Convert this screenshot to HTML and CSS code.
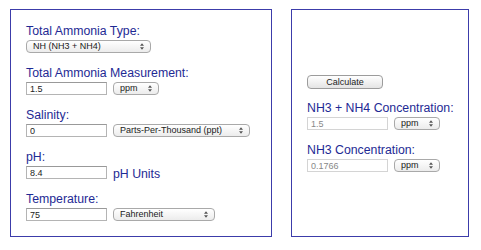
FILE: index.html
```html
<!DOCTYPE html>
<html lang="en">
<head>
    <meta charset="UTF-8">
    <meta name="viewport" content="width=device-width, initial-scale=1.0">
    <title>Ammonia Calculator</title>
    <link rel="stylesheet" href="styles.css">
</head>
<body>
    <div class="page">
        <!-- Inputs -->
        <div class="panel panel-inputs">
            <div class="field">
                <label class="field-label">Total Ammonia Type:</label>
                <div class="row">
                    <span class="select w-type">
                        <select><option>NH (NH3 + NH4)</option></select>
                        <svg class="arrows" viewBox="0 0 5 8"><path d="M2.5 0L5 3H0z M2.5 8L5 5H0z"/></svg>
                    </span>
                </div>
            </div>

            <div class="field">
                <label class="field-label">Total Ammonia Measurement:</label>
                <div class="row">
                    <input type="text" class="text-input" value="1.5">
                    <span class="select w-unit">
                        <select><option>ppm</option></select>
                        <svg class="arrows" viewBox="0 0 5 8"><path d="M2.5 0L5 3H0z M2.5 8L5 5H0z"/></svg>
                    </span>
                </div>
            </div>

            <div class="field">
                <label class="field-label">Salinity:</label>
                <div class="row">
                    <input type="text" class="text-input" value="0">
                    <span class="select w-ppt">
                        <select><option>Parts-Per-Thousand (ppt)</option></select>
                        <svg class="arrows" viewBox="0 0 5 8"><path d="M2.5 0L5 3H0z M2.5 8L5 5H0z"/></svg>
                    </span>
                </div>
            </div>

            <div class="field">
                <label class="field-label">pH:</label>
                <div class="row">
                    <input type="text" class="text-input" value="8.4">
                    <span class="unit-text">pH Units</span>
                </div>
            </div>

            <div class="field">
                <label class="field-label">Temperature:</label>
                <div class="row">
                    <input type="text" class="text-input" value="75">
                    <span class="select w-temp">
                        <select><option>Fahrenheit</option></select>
                        <svg class="arrows" viewBox="0 0 5 8"><path d="M2.5 0L5 3H0z M2.5 8L5 5H0z"/></svg>
                    </span>
                </div>
            </div>
        </div>

        <!-- Results -->
        <div class="panel panel-results">
            <button type="button" class="btn">Calculate</button>

            <div class="field">
                <label class="field-label">NH3 + NH4 Concentration:</label>
                <div class="row">
                    <input type="text" class="text-input readonly" value="1.5" readonly>
                    <span class="select w-unit">
                        <select><option>ppm</option></select>
                        <svg class="arrows" viewBox="0 0 5 8"><path d="M2.5 0L5 3H0z M2.5 8L5 5H0z"/></svg>
                    </span>
                </div>
            </div>

            <div class="field">
                <label class="field-label">NH3 Concentration:</label>
                <div class="row">
                    <input type="text" class="text-input readonly" value="0.1766" readonly>
                    <span class="select w-unit">
                        <select><option>ppm</option></select>
                        <svg class="arrows" viewBox="0 0 5 8"><path d="M2.5 0L5 3H0z M2.5 8L5 5H0z"/></svg>
                    </span>
                </div>
            </div>
        </div>
    </div>
</body>
</html>
```

FILE: styles.css
```css
body {
    font-family: "Liberation Sans", Arial, sans-serif;
    background-color: #fff;
    margin: 0;
    padding: 0;
}

.page {
    display: flex;
    gap: 19px;
    padding: 9px 0 0 10px;
}

.panel {
    box-sizing: border-box;
    height: 228px;
    border: 1px solid #3c3caa;
    background: #fff;
}

.panel-inputs {
    width: 262px;
    padding: 14px 0 0 15px;
}

.panel-results {
    width: 178px;
    padding: 65px 0 0 15px;
}

.field {
    margin-bottom: 13px;
}

.field-label {
    display: block;
    font-size: 12.3px;
    line-height: 14px;
    color: #1e2a94;
}

.row {
    display: flex;
    align-items: center;
    gap: 6px;
    margin-top: 2px;
    height: 13px;
}

.text-input {
    box-sizing: border-box;
    width: 81px;
    height: 13px;
    margin: 0;
    padding: 0 3px;
    border: 1px solid #b4b4b4;
    border-top-color: #999;
    font-family: "Liberation Sans", Arial, sans-serif;
    font-size: 9px;
    color: #222;
    outline: none;
}

.text-input.readonly {
    color: #888;
    border-color: #d4d4d4;
}

.select {
    box-sizing: border-box;
    display: inline-flex;
    align-items: center;
    height: 13px;
    padding-right: 6px;
    border: 1px solid #a9a9a9;
    border-radius: 4px;
    background: linear-gradient(#ffffff, #ececec);
}

.select select {
    flex: 1;
    min-width: 0;
    height: 11px;
    margin: 0;
    padding: 0 0 0 6px;
    border: none;
    background: transparent;
    appearance: none;
    -webkit-appearance: none;
    font-family: "Liberation Sans", Arial, sans-serif;
    font-size: 9px;
    line-height: 11px;
    color: #1a1a1a;
    outline: none;
}

.arrows {
    width: 4px;
    height: 7px;
    fill: #555;
}

.w-type { width: 125px; }
.w-unit { width: 46px; }
.w-ppt { width: 137px; }
.w-temp { width: 102px; }

.unit-text {
    font-size: 12.3px;
    color: #1e2a94;
    padding-top: 3px;
}

.btn {
    display: block;
    box-sizing: border-box;
    width: 76px;
    height: 14px;
    margin: 0 0 12px;
    padding: 0;
    border: 1px solid #9c9c9c;
    border-radius: 4px;
    background: linear-gradient(#ffffff, #e4e4e4);
    font-family: "Liberation Sans", Arial, sans-serif;
    font-size: 9px;
    color: #222;
}
```
